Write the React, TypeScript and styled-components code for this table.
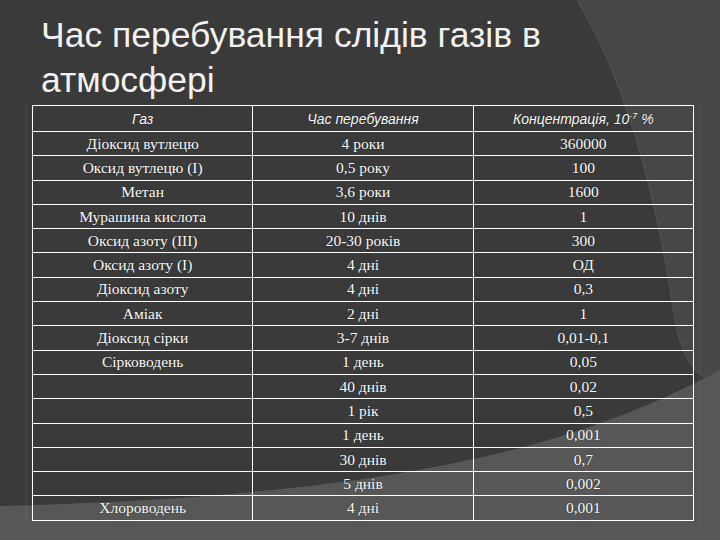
import React from "react";
import styled, { createGlobalStyle } from "styled-components";

const GlobalStyle = createGlobalStyle`
	html, body {
		margin: 0;
		padding: 0;
		background: #474747;
	}
`;

const Slide = styled.div`
	position: relative;
	width: 720px;
	height: 540px;
	overflow: hidden;
	background: #474747;
	font-family: "Liberation Sans", Arial, sans-serif;
`;

const Backdrop = styled.svg`
	position: absolute;
	top: 0;
	left: 0;
	width: 720px;
	height: 540px;
	z-index: 0;
`;

const Content = styled.div`
	position: relative;
	z-index: 1;
	display: flex;
	flex-direction: column;
	padding-top: 13px;
`;

const Title = styled.h1`
	margin: 0 0 0 41px;
	font-family: "Liberation Sans", Arial, sans-serif;
	font-weight: 400;
	font-size: 35.5px;
	line-height: 45px;
	color: #f2f2f2;
	width: 540px;
`;

const TablePanel = styled.div`
	margin: 1px 0 0 26px;
	padding: 1px 6px 4px 6px;
	width: 662px;
	box-shadow: inset 1px 0 0 rgba(255, 255, 255, 0.07), inset -1px 0 0 rgba(255, 255, 255, 0.07);
`;

const Table = styled.table`
	width: 662px;
	border-collapse: collapse;
	table-layout: fixed;
	color: #fafafa;
	text-shadow: 0 0 1px rgba(0, 0, 0, 0.6);
`;

const HeadCell = styled.th`
	height: 25px;
	padding: 0;
	border: 1px solid #fff;
	font-family: "Liberation Sans", Arial, sans-serif;
	font-style: italic;
	font-weight: 400;
	font-size: 14px;
	text-align: center;
	vertical-align: middle;

	sup {
		font-size: 9px;
		vertical-align: 5px;
	}
`;

const Cell = styled.td`
	height: 23.3px;
	padding: 0;
	border: 1px solid #fff;
	font-family: "Liberation Serif", "Times New Roman", serif;
	font-size: 15.5px;
	line-height: 18px;
	text-align: center;
	vertical-align: middle;
	white-space: nowrap;
`;

const rows: [string, string, string][] = [
	["Діоксид вутлецю", "4 роки", "360000"],
	["Оксид вутлецю (I)", "0,5 року", "100"],
	["Метан", "3,6 роки", "1600"],
	["Мурашина кислота", "10 днів", "1"],
	["Оксид азоту (III)", "20-30 років", "300"],
	["Оксид азоту (I)", "4 дні", "ОД"],
	["Діоксид азоту", "4 дні", "0,3"],
	["Аміак", "2 дні", "1"],
	["Діоксид сірки", "3-7 днів", "0,01-0,1"],
	["Сірководень", "1 день", "0,05"],
	["", "40 днів", "0,02"],
	["", "1 рік", "0,5"],
	["", "1 день", "0,001"],
	["", "30 днів", "0,7"],
	["", "5 днів", "0,002"],
	["Хлороводень", "4 дні", "0,001"],
];

export default function App() {
	return (
		<>
			<GlobalStyle />
			<Slide>
				<Backdrop viewBox="0 0 720 540">
					<path d="M0,0 L577,0 C620,70 655,180 675,320 C681,350 690,368 705,378 C560,452 380,496 0,506 Z" fill="#3a3a3a" />
					<path d="M577,0 C620,70 655,180 675,320 C681,350 690,368 705,378" fill="none" stroke="#4f4f4f" strokeWidth="1.5" />
					<path d="M0,506 C380,496 560,452 705,378 L720,370 L720,540 L0,540 Z" fill="#575757" />
				</Backdrop>
				<Content>
					<Title>Час перебування слідів газів в атмосфері</Title>
					<TablePanel>
						<Table>
							<thead>
								<tr>
									<HeadCell>Газ</HeadCell>
									<HeadCell>Час перебування</HeadCell>
									<HeadCell>
										Концентрація, 10<sup>-7</sup> %
									</HeadCell>
								</tr>
							</thead>
							<tbody>
								{rows.map((r, i) => (
									<tr key={i}>
										<Cell>{r[0]}</Cell>
										<Cell>{r[1]}</Cell>
										<Cell>{r[2]}</Cell>
									</tr>
								))}
							</tbody>
						</Table>
					</TablePanel>
				</Content>
			</Slide>
		</>
	);
}
